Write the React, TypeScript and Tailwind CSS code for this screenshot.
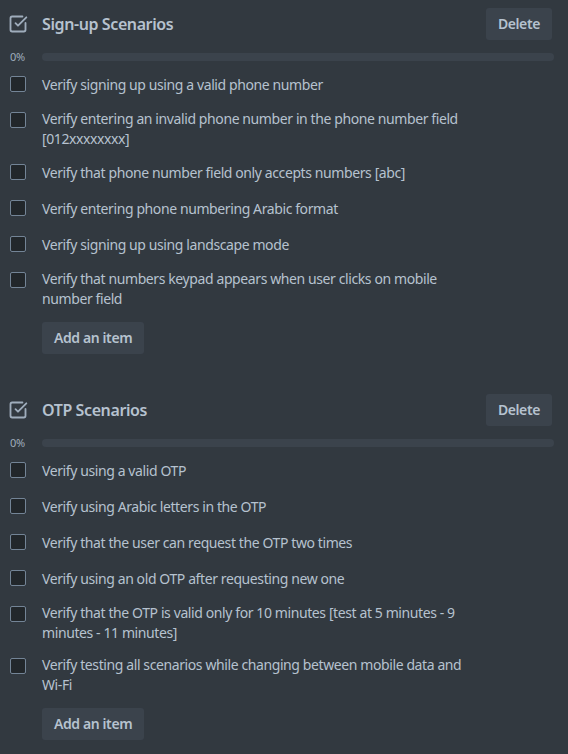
import React from "react";
import { SquareCheckBig } from "lucide-react";

type Checklist = {
  title: string;
  items: string[];
};

const checklists: Checklist[] = [
  {
    title: "Sign-up Scenarios",
    items: [
      "Verify signing up using a valid phone number",
      "Verify entering an invalid phone number in the phone number field [012xxxxxxxx]",
      "Verify that phone number field only accepts numbers [abc]",
      "Verify entering phone numbering Arabic format",
      "Verify signing up using landscape mode",
      "Verify that numbers keypad appears when user clicks on mobile number field",
    ],
  },
  {
    title: "OTP Scenarios",
    items: [
      "Verify using a valid OTP",
      "Verify using Arabic letters in the OTP",
      "Verify that the user can request the OTP two times",
      "Verify using an old OTP after requesting new one",
      "Verify that the OTP is valid only for 10 minutes [test at 5 minutes - 9 minutes - 11 minutes]",
      "Verify testing all scenarios while changing between mobile data and Wi-Fi",
    ],
  },
];

const ChecklistBlock: React.FC<{ list: Checklist }> = ({ list }) => {
  return (
    <div className="mb-10">
      <div className="flex items-center justify-between h-8">
        <div className="flex items-center">
          <div className="w-[42px] pl-[8px] flex items-center">
            <SquareCheckBig size={20} strokeWidth={2.2} className="text-[#9fadbc]" />
          </div>
          <h3 className="text-base font-semibold text-[#b6c2cf] tracking-[-0.4px]">{list.title}</h3>
        </div>
        <button className="bg-[#3b434c] text-[#b6c2cf] text-sm font-semibold px-3 h-8 rounded-[3px] mr-4 tracking-[-0.4px]">
          Delete
        </button>
      </div>

      <div className="flex items-center h-[14px] mt-[10px] mb-[3px]">
        <span className="w-[42px] pl-[10px] text-[11px] text-[#9fadbc] tracking-[-0.3px]">0%</span>
        <div className="flex-1 h-2 bg-[#3b434c] rounded-full mr-[14px]" />
      </div>

      <div>
        {list.items.map((item) => (
          <div key={item} className="flex items-start">
            <div className="w-[42px] pl-[10px] pt-[9px] shrink-0">
              <div className="w-4 h-4 rounded-[2px] border border-[#738496] bg-[#22272b]" />
            </div>
            <div className="min-h-9 flex items-center py-[6px]">
              <p className="text-sm leading-5 text-[#b6c2cf] max-w-[432px] tracking-[-0.4px]">{item}</p>
            </div>
          </div>
        ))}
      </div>

      <div className="pl-[42px] mt-[7px]">
        <button className="bg-[#3b434c] text-[#b6c2cf] text-sm font-semibold px-3 h-8 rounded-[3px] tracking-[-0.4px]">
          Add an item
        </button>
      </div>
    </div>
  );
};

export default function App() {
  return (
    <div
      className="min-h-screen bg-[#323940] pt-2"
      style={{ fontFamily: '"Noto Sans", sans-serif' }}
    >
      {checklists.map((list) => (
        <ChecklistBlock key={list.title} list={list} />
      ))}
    </div>
  );
}
